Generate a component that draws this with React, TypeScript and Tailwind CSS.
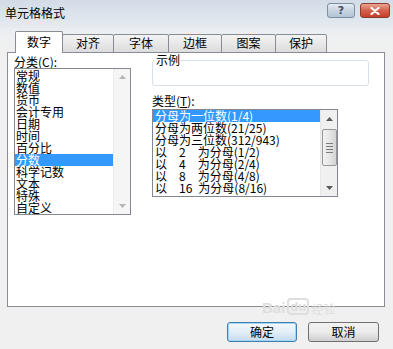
import React from "react";

const font = "font-['Noto_Sans_CJK_SC','Noto_Sans',sans-serif]";

function UpArrow({ color = "#9a9a9a" }: { color?: string }) {
  return (
    <svg width="7" height="4" viewBox="0 0 7 4">
      <path d="M3.5 0 L7 4 L0 4 Z" fill={color} />
    </svg>
  );
}
function DownArrow({ color = "#9a9a9a" }: { color?: string }) {
  return (
    <svg width="7" height="4" viewBox="0 0 7 4">
      <path d="M0 0 L7 0 L3.5 4 Z" fill={color} />
    </svg>
  );
}

function Tab({ label, width, active, first }: { label: string; width: string; active?: boolean; first?: boolean }) {
  if (active) {
    return (
      <div
        className={`relative z-10 h-[22px] ${width} border border-b-0 border-[#898c95] bg-white rounded-t-[2px] text-center pt-[4px] text-[12px] leading-[12px] text-black ${first ? "" : "-ml-px"}`}
      >
        {label}
      </div>
    );
  }
  return (
    <div
      className={`h-[19px] ${width} -ml-px border border-[#898c95] rounded-t-[2px] bg-gradient-to-b from-[#f4f4f4] to-[#dcdcdc] text-center pt-[2px] text-[12px] leading-[12px] text-black`}
    >
      {label}
    </div>
  );
}

export default function App() {
  const leftItems = ["常规", "数值", "货币", "会计专用", "日期", "时间", "百分比", "分数", "科学记数", "文本", "特殊", "自定义"];
  const rightItems = [
    "分母为一位数(1/4)",
    "分母为两位数(21/25)",
    "分母为三位数(312/943)",
    "以\u2002\u20022\u2002\u2002为分母(1/2)",
    "以\u2002\u20024\u2002\u2002为分母(2/4)",
    "以\u2002\u20028\u2002\u2002为分母(4/8)",
    "以\u2002\u200216\u2002为分母(8/16)",
  ];

  return (
    <div
      className={`relative w-[393px] h-[349px] overflow-hidden flex flex-col text-black ${font} bg-[linear-gradient(to_bottom,#d3dce6_0px,#dfe6ee_20px,#eceff2_32px,#f0f0f0_48px)]`}
    >
      {/* Title bar */}
      <div className="h-[31px] flex items-start">
        <span className="ml-[5px] mt-[6px] text-[12px] leading-[13px]">单元格格式</span>
        <div className="ml-auto mt-[3px] mr-[3px] flex gap-[5px]">
          <div className="w-[28px] h-[15px] rounded-[3px] border border-[#7d8fa3] bg-gradient-to-b from-[#e3eaf2] via-[#c8d4e1] to-[#b4c4d6] flex items-center justify-center">
            <span className="text-[11px] leading-[11px] font-bold text-[#3f4d60] font-['DejaVu_Sans',sans-serif]">?</span>
          </div>
          <div className="w-[30px] h-[15px] rounded-[3px] border border-[#8c3a2e] bg-gradient-to-b from-[#e9a592] via-[#d3604b] to-[#c2402c] flex items-center justify-center">
            <svg width="10" height="8" viewBox="0 0 10 8">
              <path d="M1.5 1 L8.5 7 M8.5 1 L1.5 7" stroke="#ffffff" strokeWidth="2.2" strokeLinecap="round" />
            </svg>
          </div>
        </div>
      </div>

      {/* Tabs */}
      <div className="h-[22px] -mb-px flex items-end pl-[15px]">
        <Tab label="数字" width="w-[48px]" active first />
        <Tab label="对齐" width="w-[52px]" />
        <Tab label="字体" width="w-[56px]" />
        <Tab label="边框" width="w-[54px]" />
        <Tab label="图案" width="w-[55px]" />
        <Tab label="保护" width="w-[52px]" />
      </div>

      {/* Panel */}
      <div className="ml-[7px] w-[378px] h-[255px] border border-[#898c95] bg-white flex pl-[6px]">
        {/* Left column */}
        <div className="w-[117px] pt-[3px] flex flex-col">
          <div className="h-[12px] text-[12px] leading-[12px]">
            分类(<span className="underline">C</span>):
          </div>
          <div className="h-[147px] border border-[#828790] flex bg-white">
            <div className="flex-1 pt-px">
              {leftItems.map((t) => (
                <div
                  key={t}
                  className={`h-[12px] pl-[1px] text-[12px] leading-[12px] whitespace-nowrap ${t === "分数" ? "bg-[#3399ff] text-white" : ""}`}
                >
                  {t}
                </div>
              ))}
            </div>
            <div className="w-[17px] bg-[#f5f5f5] border-l border-[#ececec] flex flex-col justify-between items-center py-[6px]">
              <UpArrow color="#b5b5b5" />
              <DownArrow color="#b5b5b5" />
            </div>
          </div>
        </div>

        {/* Right column */}
        <div className="ml-[21px] w-[217px] flex flex-col">
          <div className="relative mt-[7px] h-[26px] border border-[#d5dfe5] rounded-[3px]">
            <span className="absolute -top-[8px] left-[2px] bg-white px-px text-[12px] leading-[13px]">示例</span>
          </div>
          <div className="mt-[9px] h-[12px] text-[12px] leading-[12px]">
            类型(<span className="underline">T</span>):
          </div>
          <div className="mt-[2px] w-[186px] h-[88px] border border-[#828790] flex bg-white">
            <div className="flex-1 overflow-hidden">
              {rightItems.map((t, i) => (
                <div
                  key={t}
                  className={`h-[12px] pl-[2px] text-[12px] leading-[12px] whitespace-pre ${i === 0 ? "bg-[#3399ff] text-white" : ""}`}
                >
                  {t}
                </div>
              ))}
            </div>
            <div className="w-[17px] bg-[#f0f0f0] border-l border-[#e6e6e6] flex flex-col items-center">
              <div className="h-[18px] flex items-center justify-center">
                <UpArrow color="#5a5a5a" />
              </div>
              <div className="mt-[1px] w-[15px] h-[37px] rounded-[2px] border border-[#979797] bg-gradient-to-r from-[#f2f2f2] via-[#e6e6e6] to-[#d4d4d4] flex flex-col items-center justify-center gap-[2px]">
                <div className="w-[7px] h-px bg-[#7a7a7a]" />
                <div className="w-[7px] h-px bg-[#7a7a7a]" />
                <div className="w-[7px] h-px bg-[#7a7a7a]" />
                <div className="w-[7px] h-px bg-[#7a7a7a]" />
              </div>
              <div className="flex-1 flex items-end pb-[6px]">
                <DownArrow color="#5a5a5a" />
              </div>
            </div>
          </div>
        </div>
      </div>

      {/* Buttons */}
      <div className="mt-[15px] flex justify-end gap-[11px] pr-[14px]">
        <button className="w-[70px] h-[20px] rounded-[3px] border border-[#3c7fb1] bg-gradient-to-b from-[#f3f8fc] via-[#e3eef8] to-[#c4dcf0] text-[12px] leading-[12px] shadow-[inset_0_0_0_1px_#a6d4f1]">
          确定
        </button>
        <button className="w-[71px] h-[20px] rounded-[3px] border border-[#707070] bg-gradient-to-b from-[#f2f2f2] via-[#ebebeb] to-[#cfcfcf] text-[12px] leading-[12px]">
          取消
        </button>
      </div>

      {/* Watermark */}
      <div className="absolute left-[262px] top-[298px] flex items-end gap-[2px] text-[#dedede] font-['Liberation_Sans',sans-serif] font-bold pointer-events-none">
        <span className="text-[15px] leading-[15px]">Bai</span>
        <span className="text-[13px] leading-[13px] border-2 border-[#dedede] rounded-[4px] px-[1px]">du</span>
        <span className={`text-[12px] leading-[12px] font-normal ${font}`}>经验</span>
      </div>
    </div>
  );
}
